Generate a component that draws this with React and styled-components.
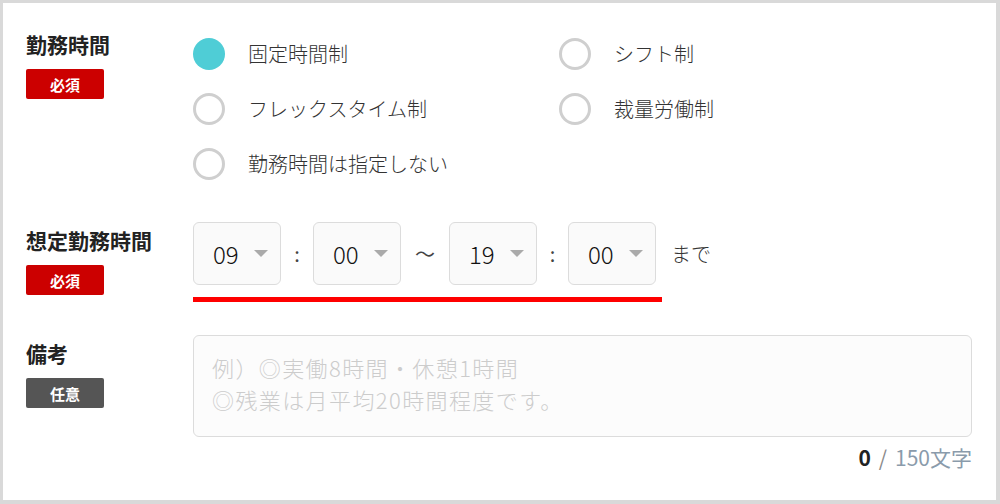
import styled, { createGlobalStyle } from "styled-components"

const GlobalStyle = createGlobalStyle`
    * {
        box-sizing: border-box;
    }

    body {
        margin: 0;
        background: #fff;
        font-family: "Noto Sans CJK JP", "Noto Sans", sans-serif;
        color: #333;
    }
`

const workStyles = [
    { label: "固定時間制", checked: true },
    { label: "シフト制" },
    { label: "フレックスタイム制" },
    { label: "裁量労働制" },
    { label: "勤務時間は指定しない" },
]

export default function App() {
    return (
        <>
            <GlobalStyle />
            <Frame>
                <Section>
                    <FieldLabel>
                        <Title>勤務時間</Title>
                        <Badge $tone="required">必須</Badge>
                    </FieldLabel>
                    <RadioGrid>
                        {workStyles.map((w) => (
                            <RadioItem key={w.label}>
                                <Circle $checked={w.checked} />
                                <span>{w.label}</span>
                            </RadioItem>
                        ))}
                    </RadioGrid>
                </Section>

                <Section>
                    <FieldLabel>
                        <Title>想定勤務時間</Title>
                        <Badge $tone="required">必須</Badge>
                    </FieldLabel>
                    <TimeField>
                        <TimeRow>
                            <Select>
                                <Value>09</Value>
                                <Arrow />
                            </Select>
                            <Sep $w={32}>:</Sep>
                            <Select>
                                <Value>00</Value>
                                <Arrow />
                            </Select>
                            <Sep $w={48}>〜</Sep>
                            <Select>
                                <Value>19</Value>
                                <Arrow />
                            </Select>
                            <Sep $w={31}>:</Sep>
                            <Select>
                                <Value>00</Value>
                                <Arrow />
                            </Select>
                            <Until>まで</Until>
                        </TimeRow>
                        <Underline />
                    </TimeField>
                </Section>

                <Section>
                    <FieldLabel>
                        <Title>備考</Title>
                        <Badge $tone="optional">任意</Badge>
                    </FieldLabel>
                    <div>
                        <Note
                            placeholder={"例）◎実働8時間・休憩1時間\n◎残業は月平均20時間程度です。"}
                        />
                        <Counter>
                            <strong>0</strong>
                            <Slash>/</Slash>
                            <Limit>150文字</Limit>
                        </Counter>
                    </div>
                </Section>
            </Frame>
        </>
    )
}

const Frame = styled.main`
    display: flex;
    flex-direction: column;
    gap: 31px;
    width: 1000px;
    height: 504px;
    padding: 23px 24px 0 23px;
    border: 3px solid #d9d9d9;
    border-right-width: 4px;
    border-bottom-width: 4px;
    background: #fff;
`

const Section = styled.section`
    display: grid;
    grid-template-columns: 167px 1fr;
    align-items: start;
`

const FieldLabel = styled.div`
    display: flex;
    flex-direction: column;
    align-items: flex-start;
    padding-top: 6px;
`

const Title = styled.h2`
    margin: 0;
    font-size: 21px;
    line-height: 25px;
    font-weight: 700;
    color: #222;
`

const Badge = styled.span`
    display: flex;
    align-items: center;
    justify-content: center;
    width: 78px;
    height: 30px;
    margin-top: 12px;
    border-radius: 2px;
    background: ${(p) => (p.$tone === "required" ? "#cc0000" : "#555555")};
    color: #fff;
    font-size: 15px;
    font-weight: 700;
    line-height: 1;
`

const RadioGrid = styled.div`
    display: grid;
    grid-template-columns: 366px auto;
    grid-auto-rows: 55px;
`

const RadioItem = styled.label`
    display: flex;
    align-items: center;
    gap: 23px;
    font-size: 20px;
    font-weight: 300;
    color: #333;
`

const Circle = styled.span`
    flex: none;
    width: 32px;
    height: 32px;
    border-radius: 50%;
    background: ${(p) => (p.$checked ? "#4fcdd6" : "#fff")};
    border: ${(p) => (p.$checked ? "none" : "3px solid #cfcfcf")};
`

const TimeField = styled.div`
    display: flex;
    flex-direction: column;
    align-items: flex-start;
    padding-bottom: 2px;
`

const TimeRow = styled.div`
    display: flex;
    align-items: center;
`

const Select = styled.div`
    display: flex;
    align-items: center;
    width: 88px;
    height: 63px;
    padding: 0 12px 0 19px;
    border: 1px solid #dcdcdc;
    border-radius: 6px;
    background: #fafafa;
`

const Value = styled.span`
    font-size: 24px;
    font-weight: 300;
    color: #111;
    line-height: 1;
`

const Arrow = styled.span`
    margin-left: auto;
    width: 0;
    height: 0;
    border-left: 7px solid transparent;
    border-right: 7px solid transparent;
    border-top: 7px solid #aaaaaa;
`

const Sep = styled.span`
    width: ${(p) => p.$w}px;
    text-align: center;
    font-size: 20px;
    color: #444;
`

const Until = styled.span`
    margin-left: 15px;
    font-size: 20px;
    font-weight: 300;
    color: #333;
`

const Underline = styled.div`
    width: 469px;
    height: 5px;
    margin-top: 12px;
    background: #ff0000;
`

const Note = styled.textarea`
    display: block;
    width: 100%;
    height: 102px;
    padding: 15px 18px;
    border: 1px solid #dcdcdc;
    border-radius: 6px;
    background: #fcfcfc;
    font-family: inherit;
    font-size: 22px;
    font-weight: 300;
    line-height: 32px;
    letter-spacing: 1.4px;
    resize: none;
    outline: none;

    &::placeholder {
        color: #cccccc;
    }
`

const Counter = styled.div`
    margin-top: 8px;
    text-align: right;
    font-size: 21px;
    line-height: 24px;

    strong {
        color: #222;
        font-weight: 700;
    }
`

const Slash = styled.span`
    margin: 0 8px;
    color: #8a8a8a;
`

const Limit = styled.span`
    color: #8a9bab;
`
